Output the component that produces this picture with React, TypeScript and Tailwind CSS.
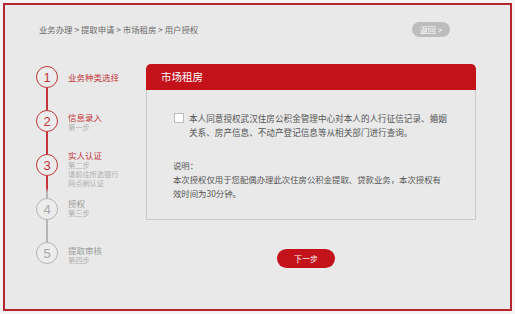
const font = { fontFamily: '"Noto Sans CJK SC", "Noto Sans", sans-serif' };

type Step = {
  num: number;
  title: string;
  subs: string[];
  active: boolean;
  offset: string;
  line?: string;
};

const steps: Step[] = [
  { num: 1, title: '业务种类选择', subs: [], active: true, offset: 'mt-[5.5px]', line: 'bg-[#c4353b]' },
  { num: 2, title: '信息录入', subs: ['第一步'], active: true, offset: 'mt-[1.5px]', line: 'bg-[#c4353b]' },
  {
    num: 3,
    title: '实人认证',
    subs: ['第二步', '请前往所选银行', '网点刷认证'],
    active: true,
    offset: '-mt-[4.5px]',
    line: 'bg-gradient-to-b from-[#c4353b] from-55% to-[#b5b5b5] to-75%',
  },
  { num: 4, title: '授权', subs: ['第三步'], active: false, offset: '-mt-[0.5px]', line: 'bg-[#b5b5b5]' },
  { num: 5, title: '提取审核', subs: ['第四步'], active: false, offset: 'mt-[2.5px]' },
];

function StepItem({ step }: { step: Step }) {
  const ring = step.active ? 'border-[#c4353b] text-[#c4353b]' : 'border-[#b5b5b5] text-[#a8a8a8]';
  return (
    <div className={`flex ${step.line ? 'h-[44px]' : 'h-[22px]'}`}>
      <div className="flex w-[22px] flex-col items-center">
        <div
          className={`flex h-[22px] w-[22px] shrink-0 items-center justify-center rounded-full border-[1.5px] bg-[#ececec] text-[13px] leading-none ${ring}`}
          style={{ fontFamily: '"Liberation Sans", Arial, sans-serif' }}
        >
          {step.num}
        </div>
        {step.line && <div className={`w-[1.5px] flex-1 ${step.line}`} />}
      </div>
      <div className={`ml-[10px] ${step.offset}`}>
        <div className={`text-[8.5px] leading-[11px] ${step.active ? 'text-[#c4353b]' : 'text-[#9a9a9a]'}`}>
          {step.title}
        </div>
        {step.subs.map((s) => (
          <div key={s} className="text-[7.2px] leading-[9px] text-[#b0b0b0]">
            {s}
          </div>
        ))}
      </div>
    </div>
  );
}

export default function App() {
  return (
    <div className="h-[314px] w-[515px] bg-[#f3f3f3] p-[3px]" style={font}>
      <div className="flex h-full w-full flex-col border-2 border-[#b3262d] bg-[#e9e9e9]">
        {/* top bar */}
        <div className="flex h-[15px] items-center justify-between pl-[34px] pr-[60px] mt-[17px]">
          <div className="text-[8.4px] text-[#6a6a6a]">业务办理 &gt; 提取申请 &gt; 市场租房 &gt; 用户授权</div>
          <div className="flex h-[15px] w-[38px] items-center justify-center rounded-full bg-[#bdbdbd] text-[8px] text-white">
            返回 &gt;
          </div>
        </div>

        {/* main */}
        <div className="mt-[27px] flex pl-[31px]">
          <div className="mt-[2px] w-[110px]">
            {steps.map((s) => (
              <StepItem key={s.num} step={s} />
            ))}
          </div>

          <div className="flex w-[330px] flex-col">
            <div className="flex h-[26px] items-center rounded-t-[5px] bg-[#c3121a] pl-[15px] text-[10.5px] text-white">
              市场租房
            </div>
            <div className="border border-t-0 border-[#c9c9c9] pb-[19px] pl-[26px] pt-[21px] text-[8.5px] leading-[14px] text-[#555]">
              <div className="flex items-start">
                <div className="ml-[1px] mt-[2px] h-[10px] w-[10px] shrink-0 border border-[#bdbdbd] bg-white" />
                <div className="ml-[5px] text-[8.6px]">
                  <div className="whitespace-nowrap">本人同意授权武汉住房公积金管理中心对本人的人行征信记录、婚姻</div>
                  <div className="whitespace-nowrap">关系、房产信息、不动产登记信息等从相关部门进行查询。</div>
                </div>
              </div>
              <div className="mt-[19px] text-[8.4px]">
                <div>说明：</div>
                <div className="whitespace-nowrap">本次授权仅用于您配偶办理此次住房公积金提取、贷款业务，本次授权有</div>
                <div className="whitespace-nowrap">效时间为30分钟。</div>
              </div>
            </div>

            <button className="ml-[131px] mt-[29px] flex h-[19px] w-[58px] items-center justify-center rounded-full bg-[#c3121a] text-[8px] text-white">
              下一步
            </button>
          </div>
        </div>
      </div>
    </div>
  );
}
